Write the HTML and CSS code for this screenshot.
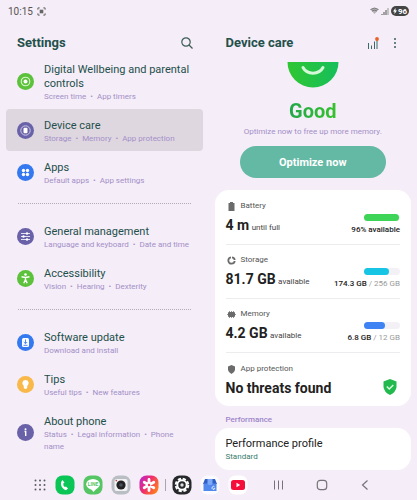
FILE: index.html
```html
<!DOCTYPE html>
<html lang="en">
<head>
    <meta charset="UTF-8">
    <meta name="viewport" content="width=device-width, initial-scale=1.0">
    <title>Settings</title>
    <link rel="stylesheet" href="styles.css">
</head>
<body>
    <div class="status">
        <span>10:15</span>
        <svg class="capture" viewBox="0 0 10 10"><path d="M1 3V1h2M7 1h2v2M9 7v2H7M3 9H1V7" fill="none" stroke="#555" stroke-width="1"/><rect x="3" y="3" width="4" height="4" fill="#666"/></svg>
        <div class="signals">
            <svg width="9" height="8" viewBox="0 0 9 8"><path d="M.5 2.5Q4.500-.5 8.500 2.500L4.500 7z" fill="#b5b0b6"/><path d="M.5 2.500Q4.500-.5 8.500 2.500M2 4Q4.500 2.200 7 4" fill="none" stroke="#777"/></svg>
            <svg width="8" height="8" viewBox="0 0 8 8"><path d="M1 7v1M3 5v3M5 3v5" stroke="#777" stroke-width="1.300"/><path d="M7 1v7" stroke="#aaa" stroke-width="1.300"/></svg>
            <span class="charge"><svg width="4" height="6" viewBox="0 0 4 6"><path d="M2.500 0L0 3.500h1.500V6L4 2.500H2.500z" fill="#fff"/></svg>96</span>
        </div>
    </div>
    <main class="panes">
        <section class="pane">
            <header class="bar">
                <h1>Settings</h1>
                <button class="tool" aria-label="Search">
                    <svg width="12" height="12" viewBox="0 0 12 12" fill="none" stroke="#3d5c58" stroke-width="1.200"><circle cx="5" cy="5" r="4.200"/><path d="M8 8l3.500 3.500"/></svg>
                </button>
            </header>
            <nav class="list">
                <a class="item" href="#wellbeing">
                    <svg class="icon" viewBox="0 0 17 17"><circle cx="8.500" cy="8.500" r="8.500" fill="#5cc13b"/><circle cx="8.500" cy="8.500" r="4.300" fill="none" stroke="#d9f5cf" stroke-width="1.100"/><circle cx="8.500" cy="8.500" r="2" fill="#fff"/></svg>
                    <span class="text">
                        <span class="name">Digital Wellbeing and parental controls</span>
                        <span class="sub">Screen time &nbsp;•&nbsp; App timers</span>
                    </span>
                </a>
                <a class="item selected" href="#care">
                    <svg class="icon" viewBox="0 0 17 17"><circle cx="8.500" cy="8.500" r="8.500" fill="#6a62a8"/><circle cx="8.500" cy="8.500" r="4.700" fill="none" stroke="#cfcbe8" stroke-width="1"/><rect x="6.500" y="5.800" width="4" height="5.400" rx="1" fill="#fff"/></svg>
                    <span class="text">
                        <span class="name">Device care</span>
                        <span class="sub">Storage &nbsp;•&nbsp; Memory &nbsp;•&nbsp; App protection</span>
                    </span>
                </a>
                <a class="item" href="#apps">
                    <svg class="icon" viewBox="0 0 17 17"><circle cx="8.500" cy="8.500" r="8.500" fill="#3579f0"/><g fill="#fff"><circle cx="6.500" cy="6.500" r="1.700"/><circle cx="10.500" cy="6.500" r="1.700"/><circle cx="6.500" cy="10.500" r="1.700"/><circle cx="10.500" cy="10.500" r="1.700"/></g></svg>
                    <span class="text">
                        <span class="name">Apps</span>
                        <span class="sub">Default apps &nbsp;•&nbsp; App settings</span>
                    </span>
                </a>
                <hr>
                <a class="item" href="#general">
                    <svg class="icon" viewBox="0 0 17 17"><circle cx="8.500" cy="8.500" r="8.500" fill="#6a62a8"/><path d="M4 5.500h9M4 8.500h9M4 11.500h9" stroke="#e4e1f3" stroke-width="1"/><g fill="#fff"><circle cx="10" cy="5.500" r="1.200"/><circle cx="6.500" cy="8.500" r="1.200"/><circle cx="10" cy="11.500" r="1.200"/></g></svg>
                    <span class="text">
                        <span class="name">General management</span>
                        <span class="sub">Language and keyboard &nbsp;•&nbsp; Date and time</span>
                    </span>
                </a>
                <a class="item" href="#accessibility">
                    <svg class="icon" viewBox="0 0 17 17"><circle cx="8.500" cy="8.500" r="8.500" fill="#5cc13b"/><circle cx="8.500" cy="4.500" r="1.300" fill="#fff"/><path d="M4.500 6.800l4 .7 4-.7M8.500 7.500v2.500M8.500 9.500l-1.700 3.700M8.500 9.500l1.700 3.700" stroke="#fff" stroke-width="1.400" fill="none"/></svg>
                    <span class="text">
                        <span class="name">Accessibility</span>
                        <span class="sub">Vision &nbsp;•&nbsp; Hearing &nbsp;•&nbsp; Dexterity</span>
                    </span>
                </a>
                <hr>
                <a class="item" href="#update">
                    <svg class="icon" viewBox="0 0 17 17"><circle cx="8.500" cy="8.500" r="8.500" fill="#3579f0"/><rect x="5" y="4" width="7" height="9" rx="1.500" fill="#fff"/><path d="M8.500 5.500v4M6.800 8l1.700 1.700L10.200 8M6.500 11.300h4" stroke="#3579f0" fill="none" stroke-width=".9"/></svg>
                    <span class="text">
                        <span class="name">Software update</span>
                        <span class="sub">Download and install</span>
                    </span>
                </a>
                <a class="item" href="#tips">
                    <svg class="icon" viewBox="0 0 17 17"><circle cx="8.500" cy="8.500" r="8.500" fill="#f9b84a"/><path d="M8.500 4a3.200 3.200 0 0 0-1.700 5.900V12q1.700 1.800 3.400 0V9.900A3.200 3.200 0 0 0 8.500 4z" fill="#fff"/></svg>
                    <span class="text">
                        <span class="name">Tips</span>
                        <span class="sub">Useful tips &nbsp;•&nbsp; New features</span>
                    </span>
                </a>
                <a class="item" href="#about">
                    <svg class="icon" viewBox="0 0 17 17"><circle cx="8.500" cy="8.500" r="8.500" fill="#6a62a8"/><circle cx="8.500" cy="5.200" r="1" fill="#fff"/><path d="M7.500 7.500h1.200V12" stroke="#fff" stroke-width="1.400" fill="none"/></svg>
                    <span class="text">
                        <span class="name">About phone</span>
                        <span class="sub">Status &nbsp;•&nbsp; Legal information &nbsp;•&nbsp; Phone name</span>
                    </span>
                </a>
            </nav>
        </section>

        <section class="pane">
            <header class="bar">
                <h1>Device care</h1>
                <button class="tool" aria-label="Usage">
                    <svg width="12" height="12" viewBox="0 0 12 12"><path d="M1.500 6v6M4.500 8.500V12M7.500 4.500V12M10 2v10" stroke="#3d6a64" stroke-width="1"/><circle cx="10" cy="2" r="1.900" fill="#e8622c"/></svg>
                </button>
                <button class="tool" aria-label="More options">
                    <svg width="12" height="12" viewBox="0 0 12 12" fill="#3d5c58"><circle cx="6" cy="2" r="1"/><circle cx="6" cy="6" r="1"/><circle cx="6" cy="10" r="1"/></svg>
                </button>
            </header>
            <div class="hero">
                <svg class="face" width="52" height="26" viewBox="0 0 52 26">
                    <defs><linearGradient id="face"><stop offset="0" stop-color="#2fc631"/><stop offset="1" stop-color="#16bf5c"/></linearGradient></defs>
                    <path d="M.5 0h51a25.500 25.500 0 0 1-51 0z" fill="url(#face)"/>
                    <path d="M16 5.500c4 7.500 16 7.500 20 0" fill="none" stroke="#d5f8d8" stroke-width="3" stroke-linecap="round"/>
                </svg>
                <h2>Good</h2>
                <p>Optimize now to free up more memory.</p>
                <button class="optimize">Optimize now</button>
            </div>
            <div class="card">
                <div class="row">
                    <div>
                        <h3><svg width="9" height="9" viewBox="0 0 9 9" fill="#6b6b6b"><path d="M3 0h3v1h1.500v8h-6V1H3z"/></svg>Battery</h3>
                        <p class="value">4 m <small>until full</small></p>
                    </div>
                    <div class="usage">
                        <div class="track"><div class="fill green" style="width: 96%"></div></div>
                        <p><b>96% available</b></p>
                    </div>
                </div>
                <div class="row">
                    <div>
                        <h3><svg width="9" height="9" viewBox="0 0 9 9"><circle cx="4.500" cy="4.500" r="3.200" fill="none" stroke="#6b6b6b" stroke-width="1.800"/><path d="M4.500 0v4.500H9" fill="none" stroke="#fff" stroke-width="1"/></svg>Storage</h3>
                        <p class="value">81.7 GB <small>available</small></p>
                    </div>
                    <div class="usage">
                        <div class="track"><div class="fill cyan" style="width: 70%"></div></div>
                        <p><b>174.3 GB</b> / 256 GB</p>
                    </div>
                </div>
                <div class="row">
                    <div>
                        <h3><svg width="9" height="9" viewBox="0 0 9 9"><rect x="1" y="2" width="7" height="5" rx="1" fill="#6b6b6b"/><path d="M2.500 1v7M4.500 1v7M6.500 1v7M0 4.500h9" stroke="#6b6b6b" stroke-width=".7"/></svg>Memory</h3>
                        <p class="value">4.2 GB <small>available</small></p>
                    </div>
                    <div class="usage">
                        <div class="track"><div class="fill blue" style="width: 57%"></div></div>
                        <p><b>6.8 GB</b> / 12 GB</p>
                    </div>
                </div>
                <div class="row">
                    <div>
                        <h3><svg width="9" height="9" viewBox="0 0 9 9"><path d="M4.500 0L8 1.500V5Q7.500 7.500 4.500 9 1.500 7.500 1 5V1.500z" fill="#6b6b6b"/></svg>App protection</h3>
                        <p class="value">No threats found</p>
                    </div>
                    <svg class="shield" width="14" height="16" viewBox="0 0 14 16"><path d="M7 0l6.500 2.500V8q-.5 5-6.500 8Q1 13 .5 8V2.500z" fill="#22b94e"/><path d="M3.800 7.500l2.500 2.500 4-4" fill="none" stroke="#d9fbe0" stroke-width="1.500"/></svg>
                </div>
            </div>
            <h4>Performance</h4>
            <a class="card profile" href="#profile">
                <span class="name">Performance profile</span>
                <span class="sub">Standard</span>
            </a>
        </section>
    </main>
    <footer class="dock">
        <div class="apps">
            <button class="grid" aria-label="All apps"><svg viewBox="0 0 20 20" fill="#5b5b66"><circle cx="5.500" cy="5.500" r="1"/><circle cx="10" cy="5.500" r="1"/><circle cx="14.500" cy="5.500" r="1"/><circle cx="5.500" cy="10" r="1"/><circle cx="10" cy="10" r="1"/><circle cx="14.500" cy="10" r="1"/><circle cx="5.500" cy="14.500" r="1"/><circle cx="10" cy="14.500" r="1"/><circle cx="14.500" cy="14.500" r="1"/></svg></button>
            <button aria-label="Phone"><svg viewBox="0 0 20 20"><rect x=".5" y=".5" width="19" height="19" rx="7" fill="#0bc657"/><path d="M7.500 5c-3 3-1.500 8.500 3.500 10.200l2-1.700-2-2-1.300.6Q8 10.500 8.200 8.500L9.500 7.800z" fill="#fff"/></svg></button>
            <button aria-label="LINE"><svg viewBox="0 0 20 20"><rect x=".5" y=".5" width="19" height="19" rx="7" fill="#56c665"/><ellipse cx="10" cy="9.300" rx="6.800" ry="5.300" fill="#fff"/><path d="M8 14l2.500 3 3.500-4z" fill="#fff"/><text x="10" y="11" text-anchor="middle" font-size="5" font-weight="700" fill="#56c665">LINE</text></svg></button>
            <button aria-label="Camera"><svg viewBox="0 0 20 20"><rect x=".5" y=".5" width="19" height="19" rx="7" fill="#b9bec5"/><rect x="3.500" y="4" width="13" height="12" rx="2" fill="#f2f2f4"/><circle cx="10" cy="10" r="4.600" fill="#222"/><circle cx="10" cy="10" r="1.800" fill="#46505c"/><circle cx="5.300" cy="5.600" r=".8" fill="#c33"/></svg></button>
            <button aria-label="Gallery"><svg viewBox="0 0 20 20"><defs><linearGradient id="gallery" x2="1" y2=".6"><stop offset="0" stop-color="#b328d8"/><stop offset=".5" stop-color="#ef2c6f"/><stop offset="1" stop-color="#ff7a21"/></linearGradient></defs><rect x=".5" y=".5" width="19" height="19" rx="7" fill="url(#gallery)"/><path d="M10 4.500v11M5.200 7.200l9.600 5.600M14.800 7.200l-9.600 5.600" stroke="#fff" stroke-width="2.800" stroke-linecap="round"/><circle cx="10" cy="10" r="1.200" fill="#ee3a63"/></svg></button>
            <span class="split"></span>
            <button aria-label="Settings"><svg viewBox="0 0 20 20"><rect x=".5" y=".5" width="19" height="19" rx="7" fill="#26282b"/><circle cx="10" cy="10" r="6.300" fill="none" stroke="#fff" stroke-width="2" stroke-dasharray="3.200 1.748"/><circle cx="10" cy="10" r="4.700" fill="#26282b" stroke="#fff" stroke-width="2"/><circle cx="10" cy="10" r="1.700" fill="#ddd"/></svg></button>
            <button aria-label="Files"><svg viewBox="0 0 20 20"><rect x=".5" y=".5" width="19" height="19" rx="7" fill="#fbfaff"/><path d="M5 4h10l2 5H3z" fill="#2f5fc4"/><path d="M3.500 8.500h13V16h-13z" fill="#5289ec"/><path d="M7.500 4h5v5q-2.500 2-5 0z" fill="#7daaf7"/><path d="M14.500 11.800a1.500 1.500 0 1 0 .4 1.600h-1.400" fill="none" stroke="#fff" stroke-width=".8"/></svg></button>
            <button aria-label="YouTube"><svg viewBox="0 0 20 20"><rect x=".5" y=".5" width="19" height="19" rx="7" fill="#fff"/><rect x="3" y="5" width="14" height="10" rx="2.500" fill="#f5103c"/><path d="M8.500 7.800v4.400l3.700-2.200z" fill="#fff"/></svg></button>
        </div>
        <div class="keys">
            <button aria-label="Recent apps"><svg viewBox="0 0 20 20"><path d="M6.500 5.500v9M10.500 5.500v9M14.500 5.500v9" stroke="#77737b" stroke-width="1"/></svg></button>
            <button aria-label="Home"><svg viewBox="0 0 20 20"><rect x="5.300" y="5.300" width="9.400" height="9.400" rx="3" fill="none" stroke="#77737b" stroke-width="1.200"/></svg></button>
            <button aria-label="Back"><svg viewBox="0 0 20 20"><path d="M12.500 5.500L7.500 10l5 4.500" fill="none" stroke="#77737b" stroke-width="1.200"/></svg></button>
        </div>
    </footer>
</body>
</html>
```
FILE: styles.css
```css
*{
    box-sizing: border-box;
}
body{
    margin: 0;
    background: #f5edf7;
    color: #23504b;
    font-family: Roboto, "Liberation Sans", sans-serif;
    font-size: 11px;
}
h1, h2, h3, h4, p{
    margin: 0;
}
a{
    color: inherit;
    text-decoration: none;
}
button{
    padding: 0;
    border: 0;
    background: none;
    font-family: inherit;
    cursor: pointer;
}
svg{
    display: block;
    flex: none;
}
.status{
    display: flex;
    align-items: center;
    gap: 4px;
    height: 22px;
    padding: 0 8px;
    color: #555;
    font-size: 10px;
}
.capture{
    width: 9px;
    height: 9px;
}
.signals{
    display: flex;
    align-items: center;
    gap: 2px;
    margin-left: auto;
}
.charge{
    display: flex;
    align-items: center;
    justify-content: center;
    gap: 1px;
    width: 18px;
    height: 10px;
    border-radius: 5px;
    background: #444;
    color: #fff;
    font-size: 8px;
    font-weight: 700;
}
.panes{
    display: grid;
    grid-template-columns: 1fr 1fr;
}
.bar{
    display: flex;
    align-items: center;
    gap: 10px;
    height: 31px;
    padding: 11px 16px 0 17px;
}
.bar h1{
    margin-right: auto;
    font-size: 13px;
    line-height: 16px;
    font-weight: 700;
}

/* left pane */
.list{
    padding: 0 6px;
}
.item{
    display: flex;
    align-items: center;
    gap: 10px;
    padding: 10px 12px 6px 11px;
    border-radius: 4px;
}
.selected{
    background: #dfd7e0;
}
.icon{
    width: 17px;
    height: 17px;
    margin-top: -4px;
}
.name{
    display: block;
    font-size: 11px;
    line-height: 14px;
}
.sub{
    display: block;
    color: #a390c8;
    font-size: 8px;
    line-height: 12px;
}
hr{
    height: 2px;
    margin: 10px 12px;
    border: 0;
    border-top: 1px dotted #b3aab8;
}

/* right pane */
.hero{
    display: flex;
    flex-direction: column;
    align-items: center;
    padding: 9px 0 12px;
}
.hero h2{
    margin-top: 10px;
    background: linear-gradient(90deg, #22a74a, #36c22e);
    -webkit-background-clip: text;
    background-clip: text;
    color: transparent;
    font-size: 20px;
    line-height: 26px;
}
.hero p{
    margin: 2px 0 8px;
    color: #a390c8;
    font-size: 8px;
    line-height: 12px;
}
.optimize{
    width: 70%;
    height: 32px;
    border-radius: 16px;
    background: #64b9a5;
    color: #fff;
    font-size: 11px;
    font-weight: 700;
}
.card{
    display: block;
    margin: 0 6px;
    padding: 0 11px;
    border-radius: 14px;
    background: #fff;
    color: #222;
}
.row{
    display: flex;
    align-items: flex-end;
    justify-content: space-between;
    height: 54px;
    padding-bottom: 6px;
}
.row:last-child{
    padding-bottom: 8px;
}
.row + .row{
    border-top: 1px solid #ececee;
}
h3{
    display: flex;
    align-items: center;
    gap: 5px;
    padding-left: 1px;
    color: #555;
    font-size: 8px;
    line-height: 12px;
    font-weight: 400;
}
.value{
    margin-top: 3px;
    font-size: 14px;
    line-height: 20px;
    font-weight: 700;
}
.value small{
    margin-left: -1px;
    color: #444;
    font-size: 8px;
    font-weight: 400;
}
.usage{
    padding-bottom: 2px;
    color: #999;
    font-size: 8px;
    line-height: 12px;
    text-align: right;
}
.usage b{
    color: #222;
    font-weight: 500;
}
.track{
    width: 36px;
    height: 7px;
    margin: 0 0 3px auto;
    border-radius: 4px;
    background: #f3f1f6;
}
.fill{
    height: 100%;
    border-radius: 4px;
}
.green{
    background: #3ed457;
}
.cyan{
    background: #16c5e4;
}
.blue{
    background: #3f82f4;
}
.shield{
    margin: 0 3px 3px 0;
}
h4{
    padding: 8px 17px 2px;
    color: #9c85ca;
    font-size: 8px;
    line-height: 12px;
    font-weight: 500;
}
.profile{
    padding: 9px 11px 7px;
}
.profile .sub{
    color: #357c6d;
}

/* bottom bar */
.dock{
    display: flex;
    align-items: center;
    height: 30px;
    padding: 0 42px 0 30px;
}
.dock svg{
    width: 20px;
    height: 20px;
}
.apps{
    display: flex;
    align-items: center;
    gap: 8px;
}
.grid{
    margin-right: -3px;
}
.split{
    width: 1px;
    height: 12px;
    margin: 0 -2px;
    background: #aaa4ae;
}
.keys{
    display: flex;
    justify-content: space-between;
    flex: 1;
    margin-left: 20px;
}
```
